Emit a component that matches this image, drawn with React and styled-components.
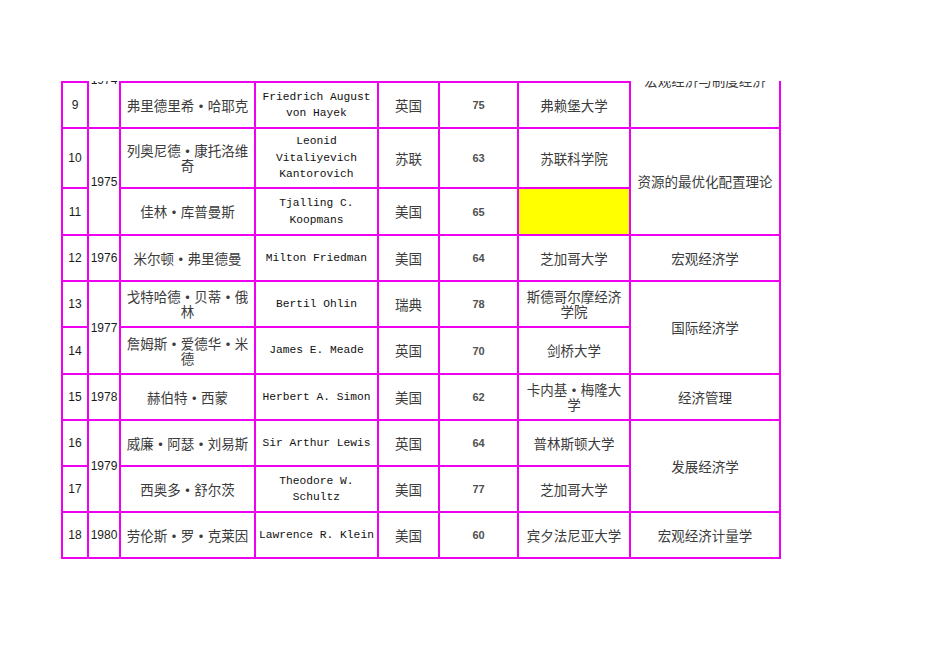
import React from "react";
import styled, { createGlobalStyle } from "styled-components";

const GlobalStyle = createGlobalStyle`
  html, body {
    margin: 0;
    padding: 0;
    background: #ffffff;
  }
`;

const rows = [
  { idx: 8, year: "1974", yearSpan: 2, zh: "纲纳·缪达尔", en: "Gunnar Myrdal", country: "瑞典", age: 76, school: "斯德哥尔摩大学", field: "宏观经济与制度经济", fieldSpan: 2 },
  { idx: 9, zh: "弗里德里希·哈耶克", en: "Friedrich August von Hayek", country: "英国", age: 75, school: "弗赖堡大学" },
  { idx: 10, year: "1975", yearSpan: 2, zh: "列奥尼德·康托洛维奇", en: "Leonid Vitaliyevich Kantorovich", country: "苏联", age: 63, school: "苏联科学院", field: "资源的最优化配置理论", fieldSpan: 2 },
  { idx: 11, zh: "佳林·库普曼斯", en: "Tjalling C. Koopmans", country: "美国", age: 65, school: "", highlight: true },
  { idx: 12, year: "1976", zh: "米尔顿·弗里德曼", en: "Milton Friedman", country: "美国", age: 64, school: "芝加哥大学", field: "宏观经济学" },
  { idx: 13, year: "1977", yearSpan: 2, zh: "戈特哈德·贝蒂·俄林", en: "Bertil Ohlin", country: "瑞典", age: 78, school: "斯德哥尔摩经济学院", field: "国际经济学", fieldSpan: 2 },
  { idx: 14, zh: "詹姆斯·爱德华·米德", en: "James E. Meade", country: "英国", age: 70, school: "剑桥大学" },
  { idx: 15, year: "1978", zh: "赫伯特·西蒙", en: "Herbert A. Simon", country: "美国", age: 62, school: "卡内基·梅隆大学", field: "经济管理" },
  { idx: 16, year: "1979", yearSpan: 2, zh: "威廉·阿瑟·刘易斯", en: "Sir Arthur Lewis", country: "英国", age: 64, school: "普林斯顿大学", field: "发展经济学", fieldSpan: 2 },
  { idx: 17, zh: "西奥多·舒尔茨", en: "Theodore W. Schultz", country: "美国", age: 77, school: "芝加哥大学" },
  { idx: 18, year: "1980", zh: "劳伦斯·罗·克莱因", en: "Lawrence R. Klein", country: "美国", age: 60, school: "宾夕法尼亚大学", field: "宏观经济计量学" },
];

// row heights in px (the first row is scrolled above the visible area)
const rowHeights = [48, 44, 58, 45, 44, 44, 45, 44, 44, 44, 44];

const Page = styled.div`
  padding: 81px 0 0 61px;
  height: 591px;
  box-sizing: border-box;
`;

const Viewport = styled.div`
  width: 720px;
  overflow: hidden;
`;

const Sheet = styled.div`
  display: grid;
  grid-template-columns: 24px 30px 133px 121px 59px 77px 110px 148px;
  grid-template-rows: ${rowHeights.map((h) => h + "px").join(" ")};
  gap: 2px;
  padding: 2px;
  margin-top: -${rowHeights[0] + 2}px;
  background: #f000f0;
  width: max-content;
`;

const fonts = {
  zh: `font-family: "Noto Sans CJK SC", sans-serif; font-size: 13.5px; line-height: 15px; color: #3c3c3c;`,
  en: `font-family: "Liberation Mono", monospace; font-size: 11.25px; line-height: 16.5px; color: #111;`,
  num: `font-family: "Liberation Sans", Arial, sans-serif; font-size: 11px; line-height: 14px; color: #505050; font-weight: 700;`,
  idx: `font-family: "Liberation Sans", Arial, sans-serif; font-size: 12px; line-height: 14px; color: #1a1a1a;`,
};

const Cell = styled.div`
  display: flex;
  align-items: center;
  justify-content: center;
  text-align: center;
  padding: 0 2px;
  background: ${(p) => (p.$highlight ? "#ffff00" : "#ffffff")};
  grid-row: ${(p) => (p.$span ? `span ${p.$span}` : "auto")};
  ${(p) => fonts[p.$kind]}
`;

const Text = styled.span`
  display: block;
`;

const Dot = styled.span`
  display: inline-block;
  width: 1em;
  text-align: center;
  font-weight: 700;
`;

function Zh({ text }) {
  const parts = text.split("·");
  return (
    <Text>
      {parts.map((part, i) => (
        <React.Fragment key={i}>
          {i > 0 && <Dot>·</Dot>}
          {part}
        </React.Fragment>
      ))}
    </Text>
  );
}

export default function App() {
  return (
    <>
      <GlobalStyle />
      <Page>
        <Viewport>
          <Sheet>
            {rows.map((r) => (
              <React.Fragment key={r.idx}>
                <Cell $kind="idx">
                  <Text>{r.idx}</Text>
                </Cell>
                {r.year && (
                  <Cell $kind="idx" $span={r.yearSpan}>
                    <Text>{r.year}</Text>
                  </Cell>
                )}
                <Cell $kind="zh">
                  <Zh text={r.zh} />
                </Cell>
                <Cell $kind="en">
                  <Text>{r.en}</Text>
                </Cell>
                <Cell $kind="zh">
                  <Text>{r.country}</Text>
                </Cell>
                <Cell $kind="num">
                  <Text>{r.age}</Text>
                </Cell>
                <Cell $kind="zh" $highlight={r.highlight}>
                  <Zh text={r.school} />
                </Cell>
                {r.field && (
                  <Cell $kind="zh" $span={r.fieldSpan}>
                    <Text>{r.field}</Text>
                  </Cell>
                )}
              </React.Fragment>
            ))}
          </Sheet>
        </Viewport>
      </Page>
    </>
  );
}
